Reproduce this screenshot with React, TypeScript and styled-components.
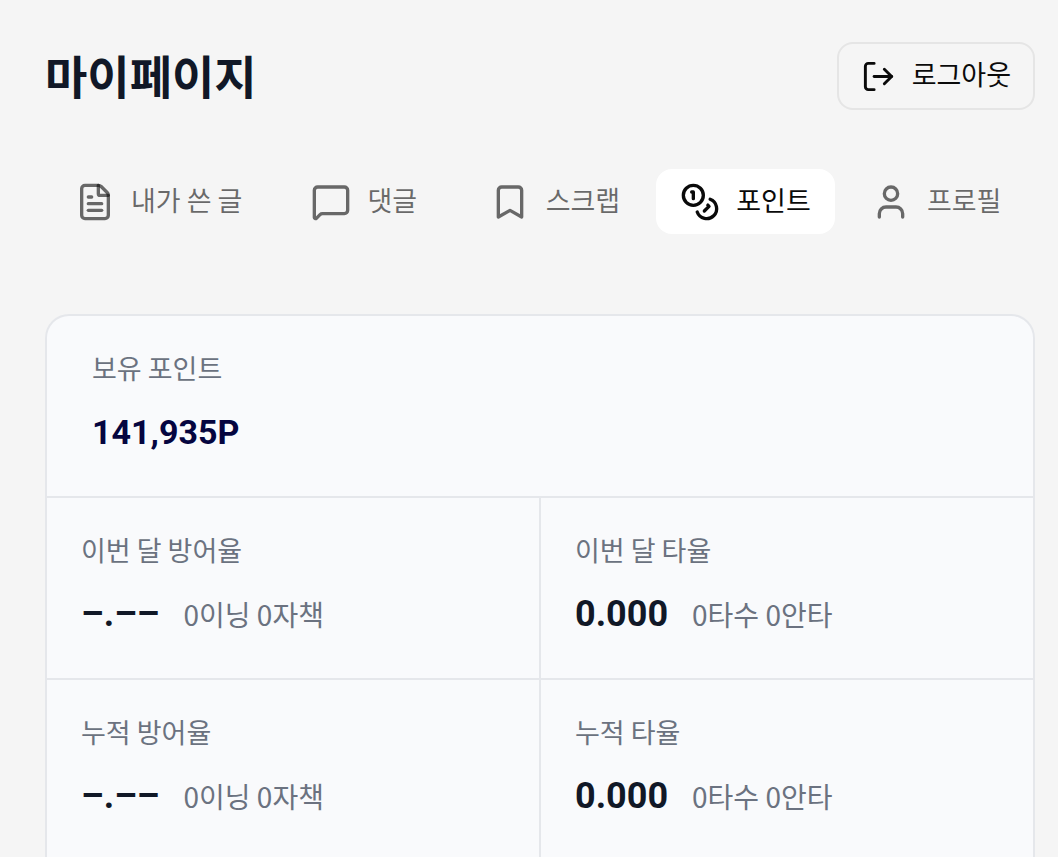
import React, { useState } from "react";
import styled, { createGlobalStyle } from "styled-components";
import { Bookmark, FileText, LogOut, MessageSquare, User } from "lucide-react";

const GlobalStyle = createGlobalStyle`
  *, *::before, *::after { box-sizing: border-box; }
  body {
    margin: 0;
    background: #f5f5f5;
    color: #111827;
    font-family: "Noto Sans CJK KR", sans-serif;
    overflow-x: hidden;
  }
  button { font: inherit; color: inherit; cursor: pointer; }
`;

const Page = styled.main`
  padding: 42px 23px 0 45px;
`;

const Header = styled.header`
  display: flex;
  align-items: center;
  justify-content: space-between;
`;

const Title = styled.h1`
  margin: 0;
  padding-bottom: 4px;
  font-size: 46px;
  line-height: 64px;
  font-weight: 700;
`;

const ButtonLabel = styled.span`
  padding-bottom: 4px;
  line-height: 40px;
  white-space: nowrap;
`;

const LogoutButton = styled.button`
  display: flex;
  align-items: center;
  gap: 16px;
  height: 68px;
  padding: 0 22px;
  border: 2px solid #e5e5e5;
  border-radius: 16px;
  background: transparent;
  color: #0a0a0a;
  font-size: 27px;
`;

const TabList = styled.div`
  display: grid;
  grid-template-columns: auto repeat(4, 1fr);
  column-gap: 5px;
  justify-items: center;
  margin-top: 59px;
  padding: 0 6px;
`;

const Tab = styled.button<{ $active: boolean }>`
  display: flex;
  align-items: center;
  gap: 16px;
  height: 65px;
  padding: 0 24px;
  border: 0;
  border-radius: 16px;
  background: ${(p) => (p.$active ? "#ffffff" : "transparent")};
  color: ${(p) => (p.$active ? "#0a0a0a" : "rgba(10, 10, 10, 0.6)")};
  font-size: 27px;
`;

const StatsCard = styled.section`
  display: grid;
  grid-template-columns: repeat(2, 1fr);
  gap: 2px;
  margin-top: 80px;
  border: 2px solid #e5e7eb;
  border-bottom: 0;
  border-radius: 24px 24px 0 0;
  background: #e5e7eb;
  overflow: hidden;
`;

const StatCell = styled.div<{ $wide?: boolean }>`
  grid-column: ${(p) => (p.$wide ? "1 / -1" : "auto")};
  height: 180px;
  padding: 30px ${(p) => (p.$wide ? 45 : 34)}px 0;
  background: #f9fafc;
`;

const StatLabel = styled.p`
  margin: 0 0 14px;
  color: #6b7280;
  font-size: 27px;
  line-height: 44px;
`;

const StatLine = styled.div`
  display: flex;
  align-items: baseline;
  gap: 24px;
  line-height: 56px;
`;

const StatValue = styled.strong<{ $accent?: boolean }>`
  color: ${(p) => (p.$accent ? "#050540" : "#111827")};
  font-family: Roboto, "Noto Sans CJK KR", sans-serif;
  font-size: ${(p) => (p.$accent ? 34 : 36)}px;
  font-weight: 700;
`;

const StatDetail = styled.span`
  color: #6b7280;
  font-size: 28px;
`;

function CoinsIcon({ size }: { size: number }) {
  return (
    <svg width={size} height={size} viewBox="0 0 24 24" fill="none" stroke="currentColor"
      strokeWidth={2} strokeLinecap="round" strokeLinejoin="round" aria-hidden="true">
      <circle cx="8" cy="8" r="6" />
      <path d="M18.09 10.37A6 6 0 1 1 10.34 18" />
      <path d="M7 6h1v4" />
      <path d="m16.71 13.88.7.71-2.82 2.82" />
    </svg>
  );
}

const tabs = [
  { label: "내가 쓴 글", Icon: FileText },
  { label: "댓글", Icon: MessageSquare },
  { label: "스크랩", Icon: Bookmark },
  { label: "포인트", Icon: CoinsIcon },
  { label: "프로필", Icon: User },
];

const stats = [
  { label: "이번 달 방어율", value: "–.––", detail: "0이닝 0자책" },
  { label: "이번 달 타율", value: "0.000", detail: "0타수 0안타" },
  { label: "누적 방어율", value: "–.––", detail: "0이닝 0자책" },
  { label: "누적 타율", value: "0.000", detail: "0타수 0안타" },
];

export default function App() {
  const [active, setActive] = useState("포인트");
  return (
    <>
      <GlobalStyle />
      <Page>
        <Header>
          <Title>마이페이지</Title>
          <LogoutButton type="button">
            <LogOut size={35} />
            <ButtonLabel>로그아웃</ButtonLabel>
          </LogoutButton>
        </Header>
        <TabList role="tablist">
          {tabs.map(({ label, Icon }) => (
            <Tab key={label} type="button" role="tab" aria-selected={active === label}
              $active={active === label} onClick={() => setActive(label)}>
              <Icon size={40} />
              <ButtonLabel>{label}</ButtonLabel>
            </Tab>
          ))}
        </TabList>
        <StatsCard>
          <StatCell $wide>
            <StatLabel>보유 포인트</StatLabel>
            <StatLine>
              <StatValue $accent>141,935P</StatValue>
            </StatLine>
          </StatCell>
          {stats.map((s) => (
            <StatCell key={s.label}>
              <StatLabel>{s.label}</StatLabel>
              <StatLine>
                <StatValue>{s.value}</StatValue>
                <StatDetail>{s.detail}</StatDetail>
              </StatLine>
            </StatCell>
          ))}
        </StatsCard>
      </Page>
    </>
  );
}
